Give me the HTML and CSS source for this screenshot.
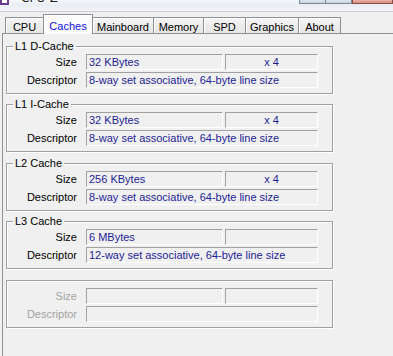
FILE: index.html
```html
<!DOCTYPE html>
<html lang="en">
<head>
  <meta charset="UTF-8" />
  <title>CPU-Z</title>
  <link rel="stylesheet" href="styles.css">
</head>
<body>

  <div class="titlebar">
    <div class="app">
      <span class="app-icon"></span>
      <span class="app-name">CPU-Z</span>
    </div>
    <div class="caption">
      <span class="cap-btn cap-min"></span>
      <span class="cap-btn cap-max"></span>
      <span class="cap-btn cap-close"></span>
    </div>
  </div>

  <div class="tabs">
    <div class="tab tab-cpu">CPU</div>
    <div class="tab tab-caches selected">Caches</div>
    <div class="tab tab-mainboard">Mainboard</div>
    <div class="tab tab-memory">Memory</div>
    <div class="tab tab-spd">SPD</div>
    <div class="tab tab-graphics">Graphics</div>
    <div class="tab tab-about">About</div>
  </div>

  <div class="panel">

    <div class="group">
      <div class="group-title">L1 D-Cache</div>
      <div class="row">
        <span class="label">Size</span>
        <span class="field field-size">32 KBytes</span>
        <span class="field field-count">x 4</span>
      </div>
      <div class="row">
        <span class="label">Descriptor</span>
        <span class="field field-desc">8-way set associative, 64-byte line size</span>
      </div>
    </div>

    <div class="group">
      <div class="group-title">L1 I-Cache</div>
      <div class="row">
        <span class="label">Size</span>
        <span class="field field-size">32 KBytes</span>
        <span class="field field-count">x 4</span>
      </div>
      <div class="row">
        <span class="label">Descriptor</span>
        <span class="field field-desc">8-way set associative, 64-byte line size</span>
      </div>
    </div>

    <div class="group">
      <div class="group-title">L2 Cache</div>
      <div class="row">
        <span class="label">Size</span>
        <span class="field field-size">256 KBytes</span>
        <span class="field field-count">x 4</span>
      </div>
      <div class="row">
        <span class="label">Descriptor</span>
        <span class="field field-desc">8-way set associative, 64-byte line size</span>
      </div>
    </div>

    <div class="group">
      <div class="group-title">L3 Cache</div>
      <div class="row">
        <span class="label">Size</span>
        <span class="field field-size">6 MBytes</span>
        <span class="field field-count"></span>
      </div>
      <div class="row">
        <span class="label">Descriptor</span>
        <span class="field field-desc">12-way set associative, 64-byte line size</span>
      </div>
    </div>

    <div class="group disabled">
      <div class="group-title empty"></div>
      <div class="row">
        <span class="label">Size</span>
        <span class="field field-size"></span>
        <span class="field field-count"></span>
      </div>
      <div class="row">
        <span class="label">Descriptor</span>
        <span class="field field-desc"></span>
      </div>
    </div>

  </div>

</body>
</html>
```

FILE: styles.css
```css
* {
  margin: 0;
  padding: 0;
  box-sizing: border-box;
}
html, body {
  width: 100%;
  height: 100%;
  background-color: #f0f0f0;
  font-family: 'Liberation Sans', Arial, sans-serif;
  font-size: 11px;
  color: #000;
  overflow: hidden;
}
body {
  display: flex;
  flex-direction: column;
}

/* window title bar, mostly cut off */
.titlebar {
  flex: none;
  height: 12px;
  display: flex;
  justify-content: space-between;
  background: linear-gradient(#f6f8fb, #e9edf3 45%, #f2f4f7);
  border-bottom: 1px solid #c9ccd1;
}
.app {
  display: flex;
  align-items: flex-start;
  gap: 12px;
  overflow: hidden;
}
.app-icon {
  width: 9px;
  height: 5px;
  border: 2px solid #6a3a8e;
  border-top: none;
  background: #fff;
}
.app-name {
  margin-top: -8px;
  font-family: 'DejaVu Sans', sans-serif;
  font-size: 12px;
  line-height: 13px;
  color: #222;
}
.caption {
  display: flex;
  align-items: flex-start;
}
.cap-btn {
  height: 4px;
  border: 1px solid #7b8794;
  border-top: none;
  background: linear-gradient(#dfe6ee, #c7d2de);
}
.cap-min {
  width: 27px;
}
.cap-max {
  width: 26px;
  border-left: none;
}
.cap-close {
  width: 41px;
  border-color: #8a4e4a;
  border-left: 1px solid #8a4e4a;
  background: linear-gradient(#e8b4a8, #d88a7c);
}

/* tab strip */
.tabs {
  flex: none;
  display: flex;
  align-items: flex-end;
  height: 21px;
  padding-left: 5px;
}
.tab {
  height: 16px;
  padding-top: 2px;
  line-height: 14px;
  text-align: center;
  border-top: 1px solid #8e9096;
  border-left: 1px solid #8e9096;
  background: linear-gradient(#f4f4f4, #e6e6e6);
  box-shadow: inset 1px 1px 0 #fff;
}
.tab.selected {
  height: 20px;
  padding-top: 4px;
  margin-bottom: -1px;
  border-right: 1px solid #8e9096;
  background: #fbfbfb;
  color: #1010e0;
  position: relative;
  z-index: 1;
}
.tab-cpu { width: 38px; }
.tab-caches { width: 50px; }
.tab-mainboard { width: 60px; border-left: none; }
.tab-memory { width: 50px; }
.tab-spd { width: 42px; }
.tab-graphics { width: 53px; }
.tab-about { width: 43px; border-right: 1px solid #8e9096; }

/* tab page */
.panel {
  flex: 1;
  min-height: 0;
  margin-left: 2px;
  border-top: 1px solid #8e9096;
  border-left: 1px solid #8e9096;
  padding: 12px 0 0 3px;
}
.group {
  width: 327px;
  padding: 0 0 5px 0;
  margin-bottom: 10px;
  border: 1px solid #a0a0a0;
  box-shadow: 1px 1px 0 #fff, inset 1px 1px 0 #fff;
}
.group:nth-child(even) {
  margin-bottom: 11px;
}
.group-title {
  width: fit-content;
  height: 13px;
  margin: -7px 0 1px 6px;
  padding: 0 2px;
  line-height: 13px;
  background: #f0f0f0;
}
.group-title.empty {
  background: none;
}
.row {
  display: flex;
  height: 16px;
}
.row + .row {
  margin-top: 2px;
}
.label {
  width: 70px;
  margin-right: 9px;
  text-align: right;
  line-height: 16px;
}
.field {
  height: 16px;
  padding-left: 2px;
  line-height: 14px;
  color: #1e1e96;
  white-space: nowrap;
  overflow: hidden;
  border-top: 1px solid #a0a0a0;
  border-left: 1px solid #a0a0a0;
  border-bottom: 1px solid #fff;
  border-right: 1px solid #fff;
}
.field-size {
  width: 137px;
}
.field-count {
  width: 93px;
  margin-left: 2px;
  padding-left: 0;
  text-align: center;
}
.field-desc {
  width: 232px;
}
.disabled .label {
  color: #a3a3a3;
}
```
